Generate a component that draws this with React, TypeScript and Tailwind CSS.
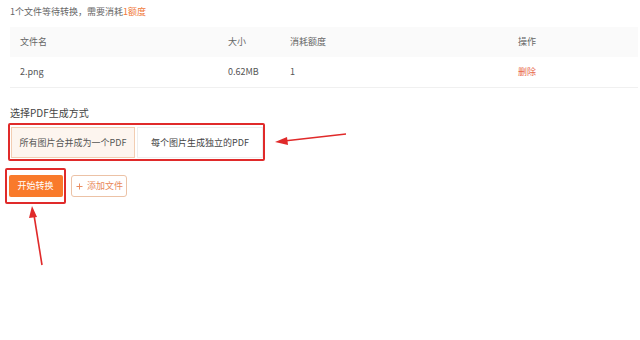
import { Plus } from "lucide-react"

const font = { fontFamily: '"Noto Sans CJK SC", "Noto Sans", sans-serif' }

const App = () => {
  return (
    <div className="relative w-[640px] h-[340px] bg-white text-[#555] overflow-hidden" style={font}>
      <div className="pt-[5px] pl-[10px] text-[9px] leading-[14px] text-[#666]">
        1个文件等待转换，需要消耗<span className="text-[#f0793a]">1额度</span>
      </div>

      <div className="ml-[10px] mr-[2px] mt-[8px] border-b border-[#f0f0f0]">
        <div className="grid grid-cols-[208px_62px_228px_1fr] h-[30px] items-center pl-[10px] bg-[#fafafa] text-[9px] text-[#666]">
          <span>文件名</span>
          <span>大小</span>
          <span>消耗额度</span>
          <span>操作</span>
        </div>
        <div className="grid grid-cols-[208px_62px_228px_1fr] h-[30px] items-center pl-[10px] text-[9px] text-[#555]">
          <span>2.png</span>
          <span>0.62MB</span>
          <span>1</span>
          <span className="text-[#e8684a]">删除</span>
        </div>
      </div>

      <div className="pl-[10px] mt-[18px] text-[10px] leading-[14px] text-[#444]">选择PDF生成方式</div>

      <div className="ml-[8px] mt-[3px] w-[257px] h-[38px] border-2 border-[#e02a2a] rounded-[2px] flex items-end pl-[1px] pb-[1px] gap-[2px]">
        <div className="w-[124px] h-[31px] flex items-center justify-center bg-[#fdf5ef] border border-[#f2cdb2] text-[9px] text-[#555]">
          所有图片合并成为一个PDF
        </div>
        <div className="w-[126px] h-[31px] flex items-center justify-center bg-white border border-[#eeeeee] text-[9px] text-[#444]">
          每个图片生成独立的PDF
        </div>
      </div>

      <div className="flex items-center gap-[5px] ml-[5px] mt-[7px]">
        <div className="w-[61px] h-[36px] border-2 border-[#e02a2a] rounded-[2px] flex items-center justify-center">
          <button className="w-[54px] h-[22px] rounded-[2px] bg-[#f97a2b] text-white text-[9px]">开始转换</button>
        </div>
        <button className="w-[56px] h-[22px] rounded-[3px] border border-[#ecc2a6] text-[#e9885a] text-[9px] flex items-center justify-center gap-[3px]">
          <Plus className="w-[9px] h-[9px]" strokeWidth={2.5} />
          添加文件
        </button>
      </div>

      <svg className="absolute left-0 top-0 pointer-events-none" width="640" height="340">
        <line x1="346" y1="134" x2="284" y2="141" stroke="#e02a2a" strokeWidth="1.6" />
        <polygon points="275,142 287,137 288,145" fill="#e02a2a" />
        <line x1="42" y1="265" x2="34" y2="215" stroke="#e02a2a" strokeWidth="1.6" />
        <polygon points="32,206 29,218 37,217" fill="#e02a2a" />
      </svg>
    </div>
  )
}

export default App
